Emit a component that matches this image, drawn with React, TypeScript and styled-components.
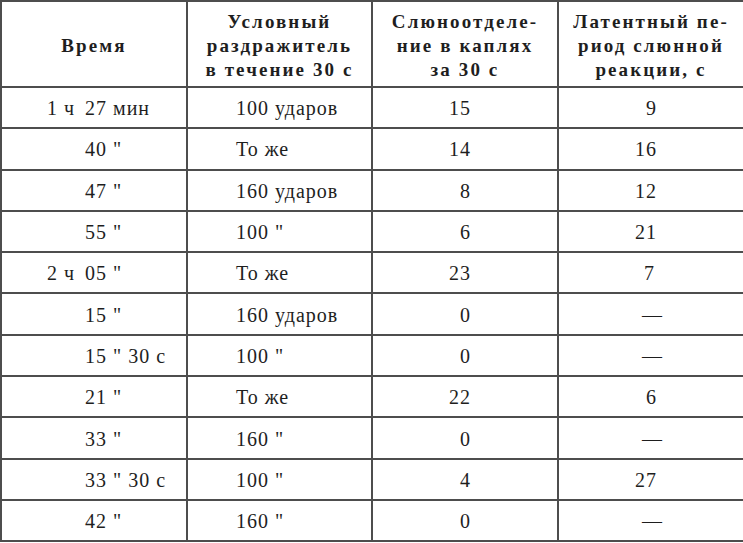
import React from "react";
import styled, { createGlobalStyle } from "styled-components";

const Global = createGlobalStyle`
  html, body { margin: 0; padding: 0; background: #ffffff; }
  body { font-family: "Liberation Serif", "DejaVu Serif", serif; color: #1c1c1c; }
`;

const Table = styled.table`
  width: 743px;
  border-collapse: collapse;
  table-layout: fixed;
  margin: 0;
  font-family: "Liberation Serif", "DejaVu Serif", serif;
`;

const HeadRow = styled.tr`
  height: 86px;
`;

const Row = styled.tr`
  height: 41.3px;
`;

const Th = styled.th`
  border: 2px solid #4d4d4d;
  padding: 3px 2px 0;
  font-size: 19px;
  font-weight: 700;
  letter-spacing: 2.1px;
  line-height: 24px;
  text-align: center;
  vertical-align: middle;
  color: #1e1e1e;
`;

const Td = styled.td<{ $align?: "left" | "right"; $pl?: number; $pr?: number }>`
  border: 2px solid #4d4d4d;
  padding: 1px ${(p) => p.$pr ?? 0}px 0 ${(p) => p.$pl ?? 0}px;
  font-size: 20px;
  letter-spacing: 1px;
  line-height: 24px;
  text-align: ${(p) => p.$align ?? "left"};
  vertical-align: middle;
  white-space: pre;
  color: #1e1e1e;
`;

const TimeWrap = styled.div`
  display: flex;
  padding-left: 45px;
`;

const Hours = styled.span`
  width: 38px;
  flex: none;
  white-space: pre;
`;

const Minutes = styled.span`
  white-space: pre;
`;

type R = { h: string; m: string; stim: string; sal: string; lat: string; latPr: number };

const rows: R[] = [
  { h: "1 ч", m: "27 мин", stim: "100 ударов", sal: "15", lat: "9", latPr: 86 },
  { h: "", m: "40 \"", stim: "То же", sal: "14", lat: "16", latPr: 86 },
  { h: "", m: "47 \"", stim: "160 ударов", sal: "8", lat: "12", latPr: 86 },
  { h: "", m: "55 \"", stim: "100 \"", sal: "6", lat: "21", latPr: 86 },
  { h: "2 ч", m: "05 \"", stim: "То же", sal: "23", lat: "7", latPr: 88 },
  { h: "", m: "15 \"", stim: "160 ударов", sal: "0", lat: "—", latPr: 80 },
  { h: "", m: "15 \" 30 с", stim: "100 \"", sal: "0", lat: "—", latPr: 80 },
  { h: "", m: "21 \"", stim: "То же", sal: "22", lat: "6", latPr: 86 },
  { h: "", m: "33 \"", stim: "160 \"", sal: "0", lat: "—", latPr: 80 },
  { h: "", m: "33 \" 30 с", stim: "100 \"", sal: "4", lat: "27", latPr: 86 },
  { h: "", m: "42 \"", stim: "160 \"", sal: "0", lat: "—", latPr: 80 },
];

export default function App() {
  return (
    <>
      <Global />
      <Table>
        <colgroup>
          <col style={{ width: 186 }} />
          <col style={{ width: 185 }} />
          <col style={{ width: 186 }} />
          <col style={{ width: 186 }} />
        </colgroup>
        <thead>
          <HeadRow>
            <Th>Время</Th>
            <Th>
              Условный
              <br />
              раздражитель
              <br />в течение 30 с
            </Th>
            <Th>
              Слюноотделе-
              <br />
              ние в каплях
              <br />
              за 30 с
            </Th>
            <Th>
              Латентный пе-
              <br />
              риод слюнной
              <br />
              реакции, с
            </Th>
          </HeadRow>
        </thead>
        <tbody>
          {rows.map((r, i) => (
            <Row key={i}>
              <Td>
                <TimeWrap>
                  <Hours>{r.h}</Hours>
                  <Minutes>{r.m}</Minutes>
                </TimeWrap>
              </Td>
              <Td $pl={48}>{r.stim}</Td>
              <Td $align="right" $pr={86}>{r.sal}</Td>
              <Td $align="right" $pr={r.latPr}>{r.lat}</Td>
            </Row>
          ))}
        </tbody>
      </Table>
    </>
  );
}
